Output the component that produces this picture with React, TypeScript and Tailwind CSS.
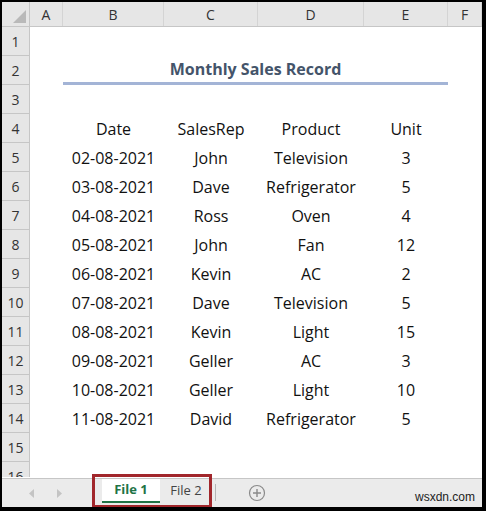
const rows = [
  ["02-08-2021", "John", "Television", "3"],
  ["03-08-2021", "Dave", "Refrigerator", "5"],
  ["04-08-2021", "Ross", "Oven", "4"],
  ["05-08-2021", "John", "Fan", "12"],
  ["06-08-2021", "Kevin", "AC", "2"],
  ["07-08-2021", "Dave", "Television", "5"],
  ["08-08-2021", "Kevin", "Light", "15"],
  ["09-08-2021", "Geller", "AC", "3"],
  ["10-08-2021", "Geller", "Light", "10"],
  ["11-08-2021", "David", "Refrigerator", "5"],
];

const cols = "grid grid-cols-[28px_33px_101px_94px_106px_84px_34px]";

function RowHead({ n }: { n: number }) {
  return (
    <div className="flex items-center justify-center bg-[#e6e6e6] border-r border-b border-[#c6c6c6] text-[14px] text-[#333]">
      {n}
    </div>
  );
}

function Cell({ children }: { children?: React.ReactNode }) {
  return <div className="flex items-center justify-center">{children}</div>;
}

export default function App() {
  return (
    <div
      className="w-[486px] h-[511px] bg-black pt-[2px] pl-[2px] pr-[4px] pb-[4px] overflow-hidden"
      style={{ fontFamily: '"Open Sans", sans-serif' }}
    >
      <div className="w-[480px] h-[505px] bg-white flex flex-col overflow-hidden">
        {/* column headers */}
        <div className={`${cols} h-[25px] bg-[#e6e6e6] border-b border-[#c6c6c6] text-[14px] text-[#333] shrink-0`}>
          <div className="relative border-r border-[#c6c6c6]">
            <svg className="absolute right-[3px] bottom-[3px]" width="13" height="13" viewBox="0 0 13 13">
              <polygon points="13,0 13,13 0,13" fill="#b9b9b9" />
            </svg>
          </div>
          {["A", "B", "C", "D", "E", "F"].map((c) => (
            <div key={c} className="flex items-center justify-center border-r border-[#d4d4d4]">
              {c}
            </div>
          ))}
        </div>

        <div className="flex-1 text-[16px] text-[#111]">
          <div className={`${cols} h-[29px]`}>
            <RowHead n={1} />
          </div>
          <div className={`${cols} h-[29px]`}>
            <RowHead n={2} />
            <div />
            <div className="col-span-4 flex items-center justify-center border-b-[3px] border-[#a3b4d6] font-bold text-[16px] text-[#44546a]">
              Monthly Sales Record
            </div>
          </div>
          <div className={`${cols} h-[29px]`}>
            <RowHead n={3} />
          </div>
          <div className={`${cols} h-[29px]`}>
            <RowHead n={4} />
            <div />
            <Cell>Date</Cell>
            <Cell>SalesRep</Cell>
            <Cell>Product</Cell>
            <Cell>Unit</Cell>
          </div>
          {rows.map((r, i) => (
            <div key={i} className={`${cols} h-[29px]`}>
              <RowHead n={i + 5} />
              <div />
              {r.map((v, j) => (
                <Cell key={j}>{v}</Cell>
              ))}
            </div>
          ))}
          <div className={`${cols} h-[29px]`}>
            <RowHead n={15} />
          </div>
          <div className={`${cols} h-[15px] overflow-hidden`}>
            <div className="bg-[#e6e6e6] border-r border-[#c6c6c6] text-[14px] text-[#333] overflow-hidden">
              <div className="h-[29px] flex items-center justify-center">16</div>
            </div>
          </div>
        </div>

        {/* sheet tabs */}
        <div className="relative h-[29px] shrink-0 bg-[#ebebeb] border-t border-[#c6c6c6] flex items-start">
          <div className="w-[90px] h-full flex items-center">
            <svg className="ml-[27px]" width="6" height="9" viewBox="0 0 6 9">
              <polygon points="5,0 5,9 0,4.5" fill="#c4c4c4" />
            </svg>
            <svg className="ml-[22px]" width="6" height="9" viewBox="0 0 6 9">
              <polygon points="0,0 0,9 5,4.5" fill="#c4c4c4" />
            </svg>
          </div>
          <div className="ml-[10px] w-[58px] h-[24px] bg-white border-b-2 border-[#217346] flex items-center justify-center text-[13px] font-bold text-[#217346]">
            File 1
          </div>
          <div className="w-[52px] h-[24px] flex items-center justify-center text-[13px] text-[#444]">
            File 2
          </div>
          <div className="ml-[3px] mt-[5px] w-px h-[17px] bg-[#b5b5b5]" />
          <svg className="ml-[32px] mt-[5px]" width="18" height="18" viewBox="0 0 18 18">
            <circle cx="9" cy="9" r="7.5" fill="none" stroke="#8a8a8a" strokeWidth="1.2" />
            <path d="M9 5v8M5 9h8" stroke="#8a8a8a" strokeWidth="1.4" />
          </svg>
          <div
            className="absolute right-[7px] bottom-[1px] text-[12px] text-[#222]"
            style={{ fontFamily: '"Liberation Sans", sans-serif' }}
          >
            wsxdn.com
          </div>
          <div className="absolute left-[90px] -top-[5px] w-[120px] h-[34px] border-[3px] border-[#a1262b]" />
        </div>
      </div>
    </div>
  );
}
